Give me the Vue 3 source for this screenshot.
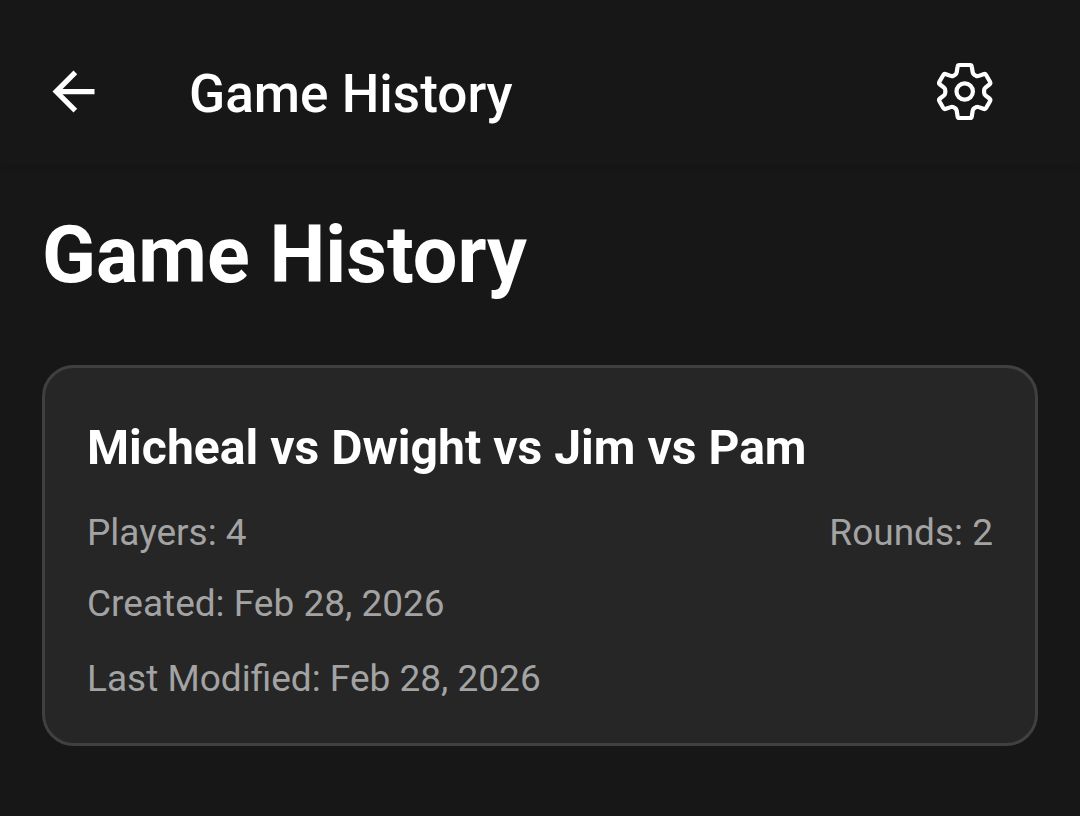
<template>
  <div class="screen">
    <header class="app-bar">
      <button type="button" class="icon-btn back-btn" aria-label="Back" @click="goBack">
        <svg class="back-icon" viewBox="0 0 24 24">
          <path d="M20 11H7.83l5.59-5.59L12 4l-8 8 8 8 1.41-1.41L7.83 13H20z" />
        </svg>
      </button>
      <span class="app-bar-title">{{ title }}</span>
      <button type="button" class="icon-btn settings-btn" aria-label="Settings" @click="openSettings">
        <svg class="settings-icon" viewBox="0 0 80 80">
          <path
            d="M34.4 13H45Q46.6 13 46.8 14.6L47.7 20.4Q48 22.2 49.6 23L51 23.8Q52.3 24.5 53.8 23.9L58.4 22.2Q60.2 21.5 61.1 23L65 29.7Q65.9 31.3 64.4 32.5L60.4 35.7Q59.1 36.8 59.1 38.4V40.6Q59.1 42.2 60.4 43.3L64.4 46.5Q65.9 47.7 65 49.3L61.1 56Q60.2 57.5 58.4 56.8L53.8 55.1Q52.3 54.5 51 55.2L49.6 56Q48 56.8 47.7 58.6L46.8 64.4Q46.6 66 45 66H34.4Q32.8 66 32.6 64.4L31.7 58.6Q31.4 56.8 29.8 56L28.4 55.2Q27.1 54.5 25.6 55.1L21 56.8Q19.2 57.5 18.3 56L14.4 49.3Q13.5 47.7 15 46.5L19 43.3Q20.3 42.2 20.3 40.6V38.4Q20.3 36.8 19 35.7L15 32.5Q13.5 31.3 14.4 29.7L18.3 23Q19.2 21.5 21 22.2L25.6 23.9Q27.1 24.5 28.4 23.8L29.8 23Q31.4 22.2 31.7 20.4L32.6 14.6Q32.8 13 34.4 13Z"
          />
          <circle cx="39.7" cy="39.5" r="8.2" />
        </svg>
      </button>
    </header>

    <main class="content">
      <h1 class="page-title">{{ title }}</h1>
      <article v-for="game in games" :key="game.id" class="game-card">
        <h2 class="game-name">{{ game.players.join(' vs ') }}</h2>
        <div class="game-row">
          <span>Players: {{ game.players.length }}</span>
          <span>Rounds: {{ game.rounds }}</span>
        </div>
        <p class="game-date">Created: {{ game.created }}</p>
        <p class="game-date modified">Last Modified: {{ game.modified }}</p>
      </article>
    </main>
  </div>
</template>

<script setup>
import { ref } from 'vue';

const emit = defineEmits(['back', 'settings']);

const title = 'Game History';

const games = ref([
  {
    id: 1,
    players: ['Micheal', 'Dwight', 'Jim', 'Pam'],
    rounds: 2,
    created: 'Feb 28, 2026',
    modified: 'Feb 28, 2026'
  }
]);

const goBack = () => {
  emit('back');
};

const openSettings = () => {
  emit('settings');
};
</script>

<style>
body {
  margin: 0;
  background: #171717;
}
</style>

<style scoped>
.screen {
  box-sizing: border-box;
  height: 816px;
  overflow: hidden;
  background: #171717;
  color: #fff;
  font-family: Roboto, "Liberation Sans", sans-serif;
}

.app-bar {
  box-sizing: border-box;
  display: flex;
  align-items: center;
  height: 165px;
  padding: 18px 75px 0 42px;
  box-shadow: 0 2px 5px rgba(0, 0, 0, 0.14);
}

.icon-btn {
  display: flex;
  padding: 0;
  border: none;
  background: transparent;
  cursor: pointer;
}

.back-icon {
  width: 63px;
  height: 63px;
  fill: #fff;
}

.app-bar-title {
  flex: 1;
  margin-left: 84px;
  padding-top: 4px;
  font-size: 53.1px;
  font-weight: 500;
  line-height: 62px;
}

.settings-icon {
  width: 80px;
  height: 80px;
  fill: none;
  stroke: #fff;
  stroke-width: 4.2;
  stroke-linejoin: round;
}

.content {
  padding: 43px 42px 0;
}

.page-title {
  margin: 0 0 63px;
  font-size: 79.2px;
  font-weight: 700;
  line-height: 94px;
}

.game-card {
  box-sizing: border-box;
  height: 381px;
  padding: 50px 42px 0;
  border: 3px solid #404040;
  border-radius: 32px;
  background: #262626;
}

.game-name {
  margin: 0 0 30px;
  font-size: 48.1px;
  font-weight: 700;
  line-height: 59px;
}

.game-row {
  display: flex;
  justify-content: space-between;
}

.game-row,
.game-date {
  color: #a3a3a3;
  font-size: 37px;
  line-height: 52px;
}

.game-date {
  margin: 19px 0 0;
}

.game-date.modified {
  margin-top: 23px;
}
</style>
